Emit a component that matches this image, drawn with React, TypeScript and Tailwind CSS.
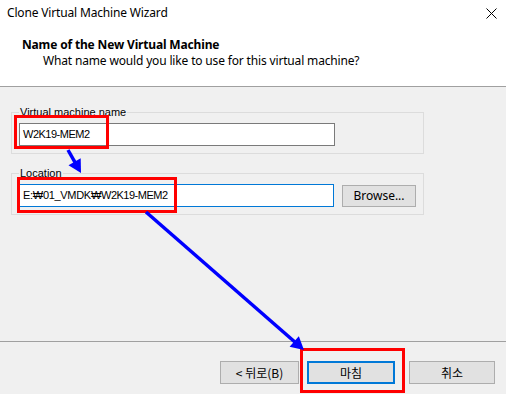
import React from "react";

const font = { fontFamily: '"Noto Sans", "Noto Sans CJK KR", sans-serif' };
const kr = { fontFamily: '"Noto Sans CJK KR", "Noto Sans", sans-serif' };
const ar = { fontFamily: '"Liberation Sans", "Noto Sans CJK KR", sans-serif' };

function Arrow({ x1, y1, x2, y2 }: { x1: number; y1: number; x2: number; y2: number }) {
  const dx = x2 - x1;
  const dy = y2 - y1;
  const len = Math.sqrt(dx * dx + dy * dy);
  const ux = dx / len;
  const uy = dy / len;
  const hl = 13;
  const hw = 7;
  const bx = x2 - ux * hl;
  const by = y2 - uy * hl;
  const p1 = `${bx - uy * hw},${by + ux * hw}`;
  const p2 = `${bx + uy * hw},${by - ux * hw}`;
  return (
    <>
      <line x1={x1} y1={y1} x2={bx + ux * 2} y2={by + uy * 2} stroke="#0000ff" strokeWidth={3.5} />
      <polygon points={`${x2},${y2} ${p1} ${p2}`} fill="#0000ff" />
    </>
  );
}

export default function App() {
  return (
    <div
      className="relative w-[506px] h-[394px] bg-[#f0f0f0] overflow-hidden flex flex-col text-[12px] text-black"
      style={font}
    >
      {/* Header */}
      <div className="h-[87px] bg-white border-b border-[#a0a0a0] flex flex-col shrink-0 tracking-[-0.16px]">
        <div className="flex items-center justify-between h-[26px] pl-[7px] pr-[8px]">
          <span className="leading-none">Clone Virtual Machine Wizard</span>
          <svg width="11" height="11" viewBox="0 0 11 11" className="mr-[1px]">
            <path d="M0.5 0.5 L10.5 10.5 M10.5 0.5 L0.5 10.5" stroke="#000" strokeWidth="1" />
          </svg>
        </div>
        <div className="pl-[22px] pt-[11px] font-bold leading-[16px]">Name of the New Virtual Machine</div>
        <div className="pl-[43px] leading-[16px]">What name would you like to use for this virtual machine?</div>
      </div>

      {/* Body */}
      <div className="flex-1 flex flex-col pl-[11px] pt-[25px]">
        <div className="relative w-[413px] h-[42px] border border-[#dcdcdc] pl-[7px] pt-[10px]">
          <span
            className="absolute left-[7px] top-[-8px] bg-[#f0f0f0] px-[1px] leading-[14px] text-[11px]"
            style={ar}
          >
            Virtual machine name
          </span>
          <div
            className="w-[316px] h-[23px] bg-white border border-[#7a7a7a] flex items-center pl-[3px] text-[11px] tracking-[-0.5px]"
            style={ar}
          >
            W2K19-MEM2
          </div>
        </div>
        <div className="relative mt-[19px] w-[413px] h-[42px] border border-[#dcdcdc] pl-[7px] pt-[10px] flex gap-[8px]">
          <span
            className="absolute left-[7px] top-[-8px] bg-[#f0f0f0] px-[1px] leading-[14px] text-[11px]"
            style={ar}
          >
            Location
          </span>
          <div
            className="w-[315px] h-[23px] bg-white border border-[#0078d7] flex items-center pl-[3px] text-[11px]"
            style={ar}
          >
            <span className="tracking-[-0.3px]">E:₩01_VMDK₩</span>
            <span className="tracking-[-0.5px]">W2K19-MEM2</span>
          </div>
          <div className="w-[74px] h-[22px] mt-[1px] bg-[#e1e1e1] border border-[#adadad] flex items-center justify-center">
            Browse...
          </div>
        </div>
      </div>

      {/* Footer */}
      <div
        className="h-[53px] border-t border-[#a0a0a0] flex items-start justify-end pt-[19px] pr-[11px] shrink-0"
        style={kr}
      >
        <div className="w-[79px] h-[23px] bg-[#e1e1e1] border border-[#adadad] flex items-center justify-center">
          &lt; 뒤로(B)
        </div>
        <div className="ml-[8px] w-[88px] h-[23px] bg-[#e1e1e1] border-2 border-[#0078d7] flex items-center justify-center">
          마침
        </div>
        <div className="ml-[14px] w-[86px] h-[23px] bg-[#e1e1e1] border border-[#adadad] flex items-center justify-center">
          취소
        </div>
      </div>

      {/* Annotations */}
      <div className="absolute left-[14px] top-[115px] w-[95px] h-[34px] border-[3px] border-[#ff0000]" />
      <div className="absolute left-[17px] top-[177px] w-[160px] h-[36px] border-[3px] border-[#ff0000]" />
      <div className="absolute left-[300px] top-[348px] w-[105px] h-[45px] border-[3px] border-[#ff0000]" />
      <svg className="absolute left-0 top-0 pointer-events-none" width="506" height="394">
        <Arrow x1={68} y1={150} x2={81} y2={173} />
        <Arrow x1={146} y1={212} x2={304} y2={350} />
      </svg>
    </div>
  );
}
